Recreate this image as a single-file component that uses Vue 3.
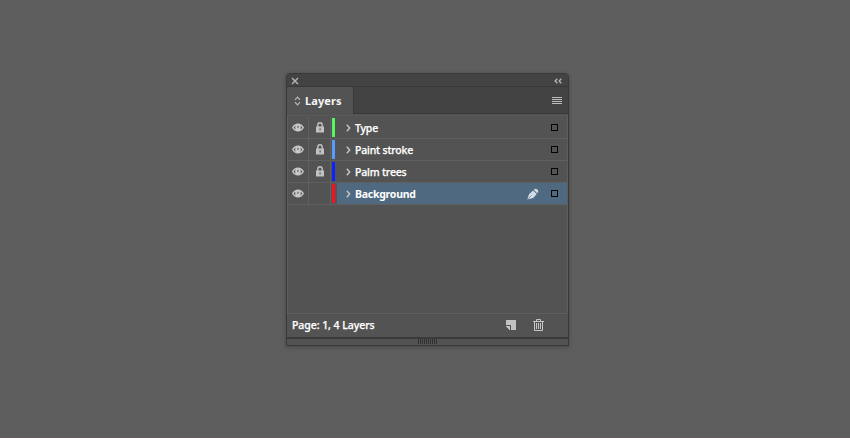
<script setup>
const layers = [
  { name: 'Type', color: '#55f75a', locked: true },
  { name: 'Paint stroke', color: '#5a9bff', locked: true },
  { name: 'Palm trees', color: '#0d22ff', locked: true },
  { name: 'Background', color: '#fa0f1e', locked: false, active: true },
]
</script>

<template>
  <main class="stage">
    <section class="panel">
      <header class="titlebar">
        <svg width="8" height="8" viewBox="0 0 8 8"><path d="M1 1L7 7M7 1L1 7" stroke="#b0b0b0" stroke-width="1.5" /></svg>
        <svg width="8" height="6" viewBox="0 0 8 6"><path d="M3.3 .7L1.1 3L3.3 5.3M7.3 .7L5.1 3L7.3 5.3" fill="none" stroke="#b4b4b4" stroke-width="1.3" /></svg>
      </header>
      <div class="tabs">
        <div class="tab">
          <svg width="7" height="10" viewBox="0 0 7 10"><path d="M1 3.8L3.5 1.2L6 3.8M1 6.2L3.5 8.8L6 6.2" fill="none" stroke="#bababa" stroke-width="1.2" /></svg>
          <span>Layers</span>
        </div>
        <div class="tabspace">
          <svg width="10" height="7" viewBox="0 0 10 7" shape-rendering="crispEdges"><path d="M0 .5H10M0 2.5H10M0 4.5H10M0 6.5H10" stroke="#bcbcbc" /></svg>
        </div>
      </div>
      <div class="list">
        <div v-for="layer in layers" :key="layer.name" class="row" :class="{ active: layer.active }">
          <div class="cell eye">
            <svg width="12" height="9" viewBox="0 0 12 9"><path fill-rule="evenodd" d="M0 4.5C2.6-.7 9.4-.7 12 4.5C9.4 9.7 2.6 9.7 0 4.5ZM1.7 4.5C2.1 5.4 2.8 6.2 3.7 6.7C3 5.4 3 3.7 3.6 2.4C2.8 2.9 2.1 3.6 1.7 4.5ZM10.3 4.5C9.9 5.4 9.2 6.2 8.3 6.7C9 5.4 9 3.7 8.4 2.4C9.2 2.9 9.9 3.6 10.3 4.5Z" fill="#c8c8c8" /><circle cx="6" cy="3.9" r="1.1" fill="#858585" /></svg>
          </div>
          <div class="cell lock">
            <svg v-if="layer.locked" width="8" height="11" viewBox="0 0 8 11"><path d="M1.8 5V3A2.2 2.2 0 0 1 6.2 3V5" fill="none" stroke="#c2c2c2" stroke-width="1.4" /><path d="M0 4.5H8V10.5H0Z" fill="#c2c2c2" /><path d="M3.5 6.3H4.6V8.5H3.5Z" fill="#535353" /></svg>
          </div>
          <div class="swatch"><i :style="{ background: layer.color }"></i></div>
          <div class="body">
            <svg class="chevron" width="5" height="8" viewBox="0 0 5 8"><path d="M.8 .8L3.7 4L.8 7.2" fill="none" stroke="#c4c4c4" stroke-width="1.4" /></svg>
            <span class="name">{{ layer.name }}</span>
            <svg v-if="layer.active" class="pen" width="12" height="12" viewBox="0 0 12 12"><path d="M.3 11.5L2 6.2L6.1 2.4L9.8 6L6.2 10ZM6.7 1.8L8.2 .8Q11 .7 11.3 3.8L10.3 5.3Z" fill="#d2dce5" /><path d="M.8 11.2L4.6 7.4" stroke="#6d8498" stroke-width=".7" /></svg>
            <b class="target"></b>
          </div>
        </div>
      </div>
      <footer class="status">
        <span>Page: 1, 4 Layers</span>
        <svg class="new" width="10" height="10" viewBox="0 0 10 10" shape-rendering="crispEdges"><path d="M0 0H10V10H5V5H0Z" fill="#c2c2c2" /><path d="M0 6H4V10H3V9H2V8H1V7H0Z" fill="#c2c2c2" /></svg>
        <svg class="trash" width="11" height="12" viewBox="0 0 11 12"><path d="M3.5 2V.5H7.5V2M0 2.5H11M1.5 3V11.5H9.5V3M3.5 4V10M5.5 4V10M7.5 4V10" fill="none" stroke="#c7c7c7" /></svg>
      </footer>
      <div class="grip"><i v-for="n in 10" :key="n"></i></div>
    </section>
  </main>
</template>

<style>
body { background: #5e5e5e; }
</style>

<style scoped>
* { box-sizing: border-box; }
svg { display: block; flex: none; }
.stage { height: 438px; padding: 73px 0 0 286px; background: #5e5e5e; border-bottom: 1px solid #665c60; font: 500 10.5px/14px "Noto Sans", sans-serif; color: #fff; }
.panel { width: 283px; height: 273px; border: 1px solid #393939; border-radius: 4px 4px 0 0; background: #535353; box-shadow: 0 1px 4px #0004; overflow: hidden; }
.titlebar { height: 13px; display: flex; align-items: center; justify-content: space-between; padding: 1px 6px 0 4px; background: #434343; border-bottom: 1px solid #383838; }
.tabs { height: 27px; display: flex; }
.tab { width: 67px; display: flex; align-items: center; padding-left: 7px; gap: 4px; border-right: 1px solid #383838; background: #535353; font-size: 11px; font-weight: 700; }
.tab span { color: #f5f5f5; letter-spacing: .1px; }
.tabspace { flex: 1; display: flex; align-items: center; justify-content: flex-end; padding-right: 6px; background: #434343; border-bottom: 1px solid #383838; }
.list { height: 199px; margin-top: 1px; padding-top: 1px; border: 1px solid #5e5e5e; border-top-color: #595959; }
.row { height: 22px; display: flex; border-bottom: 1px solid #606060; }
.cell { display: flex; align-items: center; justify-content: center; border-right: 1px solid #606060; }
.eye { width: 21px; padding: 0 1px 1px 0; }
.lock { width: 22px; padding: 0 0 0 1px; }
.swatch { width: 6px; padding: 1px 1px; }
.swatch i { display: block; width: 3px; height: 19px; }
.body { flex: 1; display: flex; align-items: center; padding-right: 9px; }
.active .body { background: #4f6981; }
.chevron { margin-left: 9px; }
.name { margin-left: 4px; flex: 1; letter-spacing: -.18px; -webkit-text-stroke: .25px #fff; }
.active .name { font-weight: 700; letter-spacing: -.25px; -webkit-text-stroke: 0; }
.pen { margin-right: 12px; }
.target { width: 7px; height: 7px; border: 1px solid #050505; }
.status { height: 23px; display: flex; align-items: center; padding: 0 24px 1px 5px; }
.status span { flex: 1; letter-spacing: -.06px; -webkit-text-stroke: .25px #fff; }
.new { margin-right: 17px; }
.grip { height: 9px; border-top: 2px solid #3a3a3a; display: flex; justify-content: center; gap: 1px; }
.grip i { width: 1px; height: 5px; background: #303030; }
</style>
